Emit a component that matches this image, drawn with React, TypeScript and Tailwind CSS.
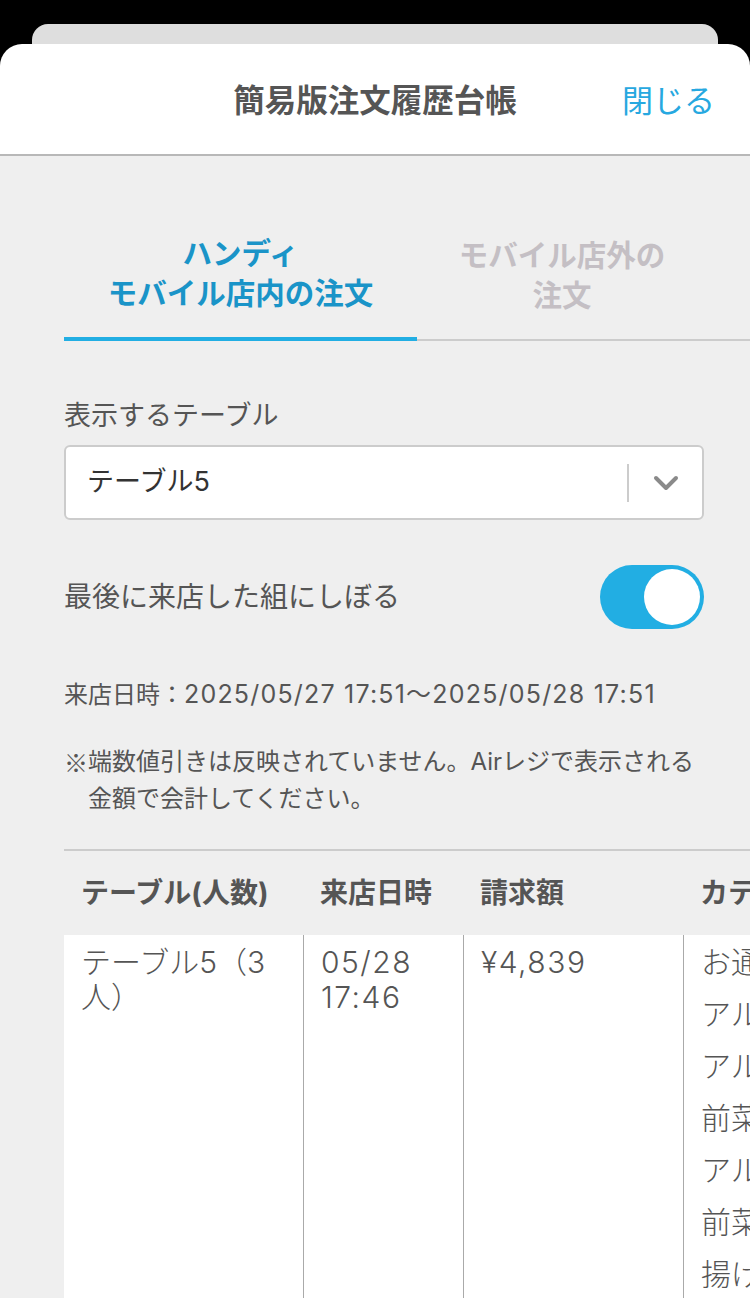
import React from "react";

const categories = ["お通し", "アルコール", "アルコール", "前菜", "アルコール", "前菜", "揚げ物", "アルコール"];

export default function App() {
    return (
        <div
            className="min-h-screen w-full bg-black overflow-hidden pt-[24px]"
            style={{ fontFamily: '"Inter", "Noto Sans CJK JP", sans-serif' }}
        >
            <div className="mx-[32px] h-[20px] rounded-t-[16px] bg-[#dedede]" />

            <div className="rounded-t-[22px] bg-white overflow-hidden">
                {/* header */}
                <header className="grid grid-cols-[1fr_auto_1fr] items-center h-[112px] border-b-2 border-[#b8b8b8]">
                    <div />
                    <h1 className="pt-[4px] text-[31.5px] font-bold text-[#555555]">簡易版注文履歴台帳</h1>
                    <button className="justify-self-end pr-[35px] pt-[4px] text-[31px] text-[#27a8e0]">閉じる</button>
                </header>

                <main className="bg-[#efefef] pl-[64px] pt-[77px]">
                    {/* tabs */}
                    <div className="flex border-b-2 border-[#cccccc]">
                        <div className="w-[353px] -mb-[2px] border-b-4 border-[#22aee3] pb-[24px] text-center text-[29.5px] font-bold leading-[40px] text-[#1a94c8]">
                            ハンディ
                            <br />
                            モバイル店内の注文
                        </div>
                        <div className="w-[290px] pt-[2px] pb-[24px] text-center text-[29.5px] font-bold leading-[40px] text-[#c4bfc4]">
                            モバイル店外の
                            <br />
                            注文
                        </div>
                    </div>

                    <div className="pr-[46px]">
                        <p className="mt-[57px] text-[27px] leading-[36px] text-[#555555]">表示するテーブル</p>

                        <div className="mt-[11px] flex h-[75px] items-center rounded-[6px] border-2 border-[#cccccc] bg-white">
                            <span className="flex-1 pl-[21px] text-[27px] text-[#333333]">テーブル5</span>
                            <div className="h-[38px] w-[2px] bg-[#cccccc]" />
                            <div className="flex w-[73px] items-center justify-center">
                                <svg width="26" height="16" viewBox="0 0 26 16" fill="none">
                                    <path d="M3 3l10 10L23 3" stroke="#8a8a8a" strokeWidth="4" strokeLinecap="round" strokeLinejoin="round" />
                                </svg>
                            </div>
                        </div>

                        <div className="mt-[45px] flex items-center justify-between">
                            <span className="text-[28px] text-[#555555]">最後に来店した組にしぼる</span>
                            <div className="flex h-[64px] w-[104px] items-center justify-end rounded-full bg-[#22aee3] pr-[4px]">
                                <div className="h-[56px] w-[56px] rounded-full bg-white" />
                            </div>
                        </div>

                        <p className="mt-[49px] text-[24px] leading-[32px] text-[#555555]">
                            来店日時：<span className="text-[25px] tracking-[1.2px]">2025/05/27 17:51〜2025/05/28 17:51</span>
                        </p>

                        <div className="mt-[32px] flex text-[24px] leading-[37px] text-[#555555]">
                            <span className="shrink-0 font-['Noto_Sans_CJK_JP',sans-serif]">※</span>
                            <span>端数値引きは反映されていません。Airレジで表示される金額で会計してください。</span>
                        </div>
                    </div>

                    {/* table */}
                    <div className="mt-[32px] w-[1100px] border-t-2 border-[#cccccc]">
                        <div className="flex h-[84px] items-center text-[28px] font-bold text-[#555555]">
                            <div className="w-[239px] pl-[17px]">テーブル(人数)</div>
                            <div className="w-[160px] pl-[17px]">来店日時</div>
                            <div className="w-[220px] pl-[17px]">請求額</div>
                            <div className="w-[240px] pl-[17px]">カテゴリ</div>
                            <div className="flex-1 pl-[17px]">商品名</div>
                        </div>
                        <div className="flex bg-white text-[30px] font-light leading-[35px] text-[#555555]">
                            <div className="w-[239px] px-[17px] pt-[10px]">テーブル5（3人）</div>
                            <div className="w-[160px] border-l border-[#aaaaaa] px-[17px] pt-[10px] tracking-[1.5px]">
                                05/28
                                <br />
                                17:46
                            </div>
                            <div className="w-[220px] border-l border-[#aaaaaa] px-[17px] pt-[10px] tracking-[1.5px]">¥4,839</div>
                            <div className="w-[240px] border-l border-[#aaaaaa] px-[17px] pt-[10px] pb-[40px]">
                                {categories.map((c, i) => (
                                    <div key={i} className="h-[52px] leading-[35px]">
                                        {c}
                                    </div>
                                ))}
                            </div>
                            <div className="flex-1 border-l border-[#aaaaaa]" />
                        </div>
                    </div>
                </main>
            </div>
        </div>
    );
}
